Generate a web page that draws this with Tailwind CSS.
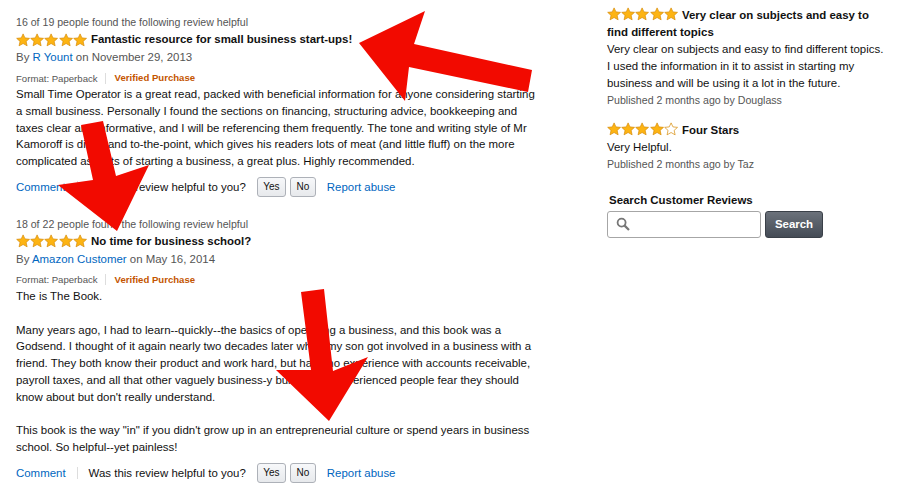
<!DOCTYPE html>
<html lang="en">
<head>
  <meta charset="UTF-8" />
  <title>Customer Reviews</title>
  <script src="https://cdn.jsdelivr.net/npm/@tailwindcss/browser@4"></script>
</head>
<body class="bg-white">
  <svg class="hidden">
    <defs>
      <symbol id="star" viewBox="0 0 24 24">
        <path d="M12 1.5L15.2 8.4 23 9.2 17.2 14.4 18.9 22 12 18 5.1 22 6.8 14.4 1 9.2 8.8 8.4z" fill="#fdb413" stroke="#d58a06" stroke-width="1.2"/>
      </symbol>
      <symbol id="star-empty" viewBox="0 0 24 24">
        <path d="M12 1.5L15.2 8.4 23 9.2 17.2 14.4 18.9 22 12 18 5.1 22 6.8 14.4 1 9.2 8.8 8.4z" fill="#fff" stroke="#d58a06" stroke-width="1.2"/>
      </symbol>
    </defs>
  </svg>

  <div class="relative w-[900px] h-[498px] overflow-hidden flex font-['Liberation_Sans',Arial,sans-serif] text-[11.45px] leading-[16.8px] text-[#111]">
    <!-- reviews -->
    <div class="w-[591px] pl-4 pt-[13px] shrink-0">
      <div class="text-[#555] text-[10.6px] leading-[18px]">16 of 19 people found the following review helpful</div>
      <div class="flex items-center h-[17px] gap-[4px]">
        <div class="flex w-[71px]">
          <svg class="w-[14.2px] h-[14px]"><use href="#star"/></svg>
          <svg class="w-[14.2px] h-[14px]"><use href="#star"/></svg>
          <svg class="w-[14.2px] h-[14px]"><use href="#star"/></svg>
          <svg class="w-[14.2px] h-[14px]"><use href="#star"/></svg>
          <svg class="w-[14.2px] h-[14px]"><use href="#star"/></svg>
        </div>
        <span class="font-bold">Fantastic resource for small business start-ups!</span>
      </div>
      <div class="text-[#555] leading-[18px]">By <a class="text-[#0066c0]">R Yount</a> on November 29, 2013</div>
      <div class="flex items-center h-[20px] pt-[4px] text-[9.6px] text-[#555]">
        <span class="pr-[7px] border-r border-[#ddd] leading-[11px]">Format: Paperback</span>
        <span class="pl-[9px] font-bold text-[#c45500]">Verified Purchase</span>
      </div>
      <p class="w-[560px]">Small Time Operator is a great read, packed with beneficial information for anyone considering starting<br>a small business. Personally I found the sections on financing, structuring advice, bookkeeping and<br>taxes clear and informative, and I will be referencing them frequently. The tone and writing style of Mr<br>Kamoroff is direct and to-the-point, which gives his readers lots of meat (and little fluff) on the more<br>complicated aspects of starting a business, a great plus. Highly recommended.</p>
      <div class="flex items-center h-[24px] mt-[5px]">
        <a class="text-[#0066c0] pr-[11px] border-r border-[#ddd] leading-[12px]">Comment</a>
        <span class="pl-[11px]">Was this review helpful to you?</span>
        <button class="ml-[11px] w-[29px] h-[20px] rounded-[3px] border border-[#adb1b8] bg-gradient-to-b from-[#f7f8fa] to-[#e7e9ec] text-[10px]">Yes</button>
        <button class="ml-[4px] w-[26px] h-[20px] rounded-[3px] border border-[#adb1b8] bg-gradient-to-b from-[#f7f8fa] to-[#e7e9ec] text-[10px]">No</button>
        <a class="ml-[11px] text-[#0066c0]">Report abuse</a>
      </div>

      <div class="text-[#555] text-[10.6px] leading-[18px] mt-[16px]">18 of 22 people found the following review helpful</div>
      <div class="flex items-center h-[17px] gap-[4px]">
        <div class="flex w-[71px]">
          <svg class="w-[14.2px] h-[14px]"><use href="#star"/></svg>
          <svg class="w-[14.2px] h-[14px]"><use href="#star"/></svg>
          <svg class="w-[14.2px] h-[14px]"><use href="#star"/></svg>
          <svg class="w-[14.2px] h-[14px]"><use href="#star"/></svg>
          <svg class="w-[14.2px] h-[14px]"><use href="#star"/></svg>
        </div>
        <span class="font-bold">No time for business school?</span>
      </div>
      <div class="text-[#555] leading-[18px]">By <a class="text-[#0066c0]">Amazon Customer</a> on May 16, 2014</div>
      <div class="flex items-center h-[20px] pt-[4px] text-[9.6px] text-[#555]">
        <span class="pr-[7px] border-r border-[#ddd] leading-[11px]">Format: Paperback</span>
        <span class="pl-[9px] font-bold text-[#c45500]">Verified Purchase</span>
      </div>
      <p class="w-[560px]">The is The Book.<br><br>Many years ago, I had to learn--quickly--the basics of operating a business, and this book was a<br>Godsend. I thought of it again nearly two decades later when my son got involved in a business with a<br>friend. They both know their product and work hard, but have no experience with accounts receivable,<br>payroll taxes, and all that other vaguely business-y bunk that inexperienced people fear they should<br>know about but don't really understand.<br><br>This book is the way "in" if you didn't grow up in an entrepreneurial culture or spend years in business<br>school. So helpful--yet painless!</p>
      <div class="flex items-center h-[24px] mt-[5px]">
        <a class="text-[#0066c0] pr-[11px] border-r border-[#ddd] leading-[12px]">Comment</a>
        <span class="pl-[11px]">Was this review helpful to you?</span>
        <button class="ml-[11px] w-[29px] h-[20px] rounded-[3px] border border-[#adb1b8] bg-gradient-to-b from-[#f7f8fa] to-[#e7e9ec] text-[10px]">Yes</button>
        <button class="ml-[4px] w-[26px] h-[20px] rounded-[3px] border border-[#adb1b8] bg-gradient-to-b from-[#f7f8fa] to-[#e7e9ec] text-[10px]">No</button>
        <a class="ml-[11px] text-[#0066c0]">Report abuse</a>
      </div>
    </div>

    <!-- sidebar -->
    <div class="w-[280px] ml-[16px] pt-[7px]">
      <div class="font-bold leading-[17px]">
        <span class="inline-flex w-[71px] mr-[4px] align-[-2px]">
          <svg class="w-[14.2px] h-[14px]"><use href="#star"/></svg>
          <svg class="w-[14.2px] h-[14px]"><use href="#star"/></svg>
          <svg class="w-[14.2px] h-[14px]"><use href="#star"/></svg>
          <svg class="w-[14.2px] h-[14px]"><use href="#star"/></svg>
          <svg class="w-[14.2px] h-[14px]"><use href="#star"/></svg>
        </span>Very clear on subjects and easy to find different topics
      </div>
      <p class="w-[280px]">Very clear on subjects and easy to find different topics. I used the information in it to assist in starting my business and will be using it a lot in the future.</p>
      <div class="text-[#555] text-[10.6px] leading-[17px] mt-[1px]">Published 2 months ago by Douglass</div>

      <div class="font-bold leading-[17px] mt-[13px]">
        <span class="inline-flex w-[71px] mr-[4px] align-[-2px]">
          <svg class="w-[14.2px] h-[14px]"><use href="#star"/></svg>
          <svg class="w-[14.2px] h-[14px]"><use href="#star"/></svg>
          <svg class="w-[14.2px] h-[14px]"><use href="#star"/></svg>
          <svg class="w-[14.2px] h-[14px]"><use href="#star"/></svg>
          <svg class="w-[14.2px] h-[14px]"><use href="#star-empty"/></svg>
        </span>Four Stars
      </div>
      <p>Very Helpful.</p>
      <div class="text-[#555] text-[10.6px] leading-[17px]">Published 2 months ago by Taz</div>

      <div class="font-bold pl-[2px] mt-[19px]">Search Customer Reviews</div>
      <div class="flex mt-[2px]">
        <div class="w-[154px] h-[27px] rounded-[3px] border border-[#a6a6a6] flex items-center pl-[8px]">
          <svg class="w-[14px] h-[14px]" viewBox="0 0 14 14" fill="none" stroke="#777" stroke-width="1.8"><circle cx="5.6" cy="5.6" r="4"/><path d="M8.6 8.6L13 13" stroke-width="2.2"/></svg>
        </div>
        <button class="ml-[4px] w-[58px] h-[27px] rounded-[3px] border border-[#3a4048] bg-gradient-to-b from-[#6b717a] to-[#454c56] text-white font-bold">Search</button>
      </div>
    </div>

    <!-- red arrows drawn over the page -->
    <svg class="absolute left-0 top-0 w-[900px] h-[498px] pointer-events-none" viewBox="0 0 900 498">
      <polygon fill="#f20a00" points="359,43 425,11 414,44 532,70 528,92 409,67 405,101"/>
      <polygon fill="#f20a00" points="81,125 103,121 116,176 149,165 117,231 58,185 93,180"/>
      <polygon fill="#f20a00" points="301,292 324,289 333,371 368,357 329,421 276,370 311,370"/>
    </svg>
  </div>
</body>
</html>
